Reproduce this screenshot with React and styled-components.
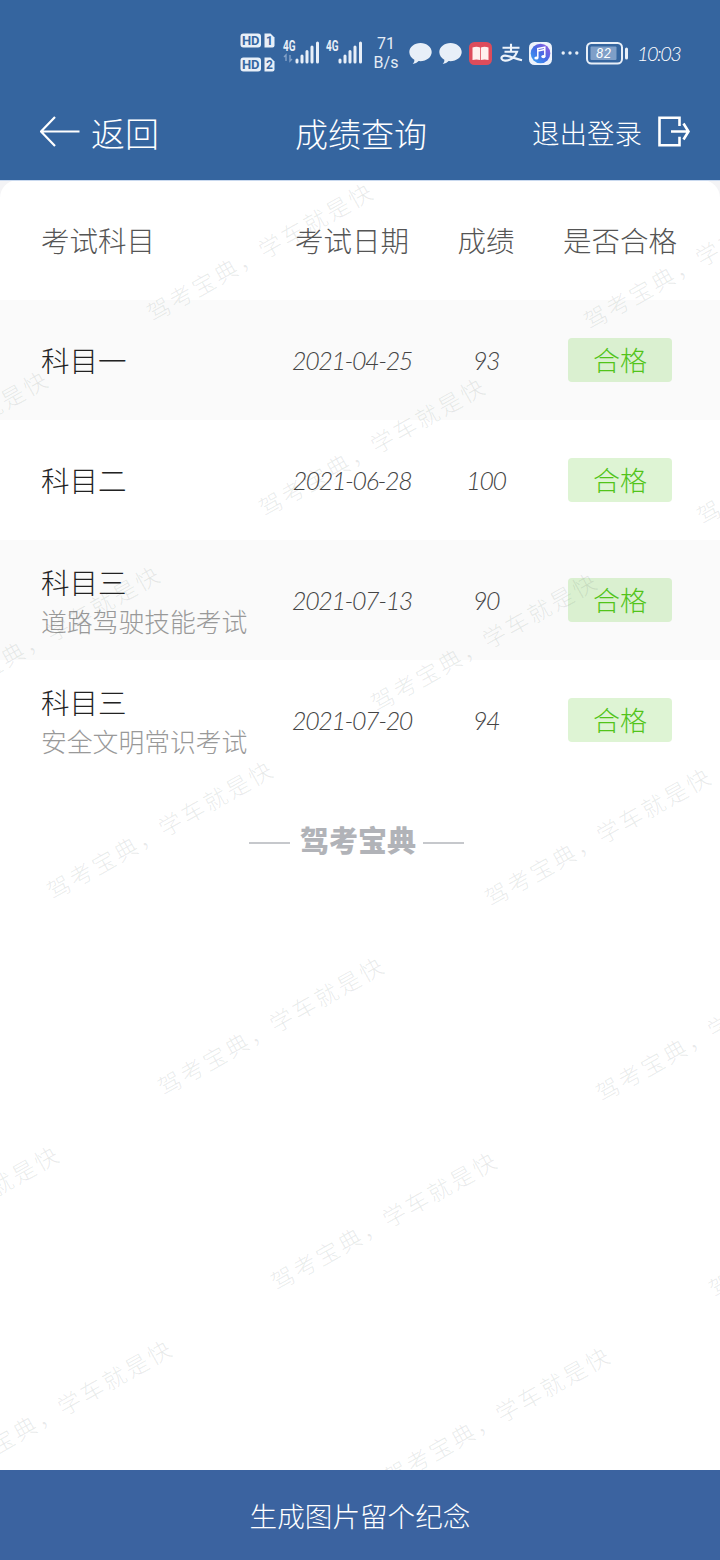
import React from "react";
import styled, { createGlobalStyle } from "styled-components";

const GlobalStyle = createGlobalStyle`
    * {
        box-sizing: border-box;
    }

    body {
        margin: 0;
        background-color: #fff;
        font-family: "Lato", "Noto Sans CJK SC", sans-serif;
        font-weight: 300;
    }
`;

const Page = styled.div`
    display: flex;
    flex-direction: column;
    width: 720px;
    height: 1560px;
    overflow: hidden;
`;

const Header = styled.header`
    height: 180px;
    background-color: #35659f;
    color: #fff;
`;

const StatusBar = styled.div`
    display: flex;
    align-items: center;
    height: 84px;
    padding: 22px 0 0 240px;
`;

const StatusIcon = styled.svg`
    display: block;
    flex: none;
    margin-left: ${(props) => props.$gap || 0}px;
    overflow: visible;
`;

const Speed = styled.div`
    width: 26px;
    margin-left: 10px;
    font-family: Roboto, sans-serif;
    font-size: 16px;
    font-weight: 400;
    line-height: 19px;
    text-align: center;
    white-space: nowrap;
    color: #e6edf6;
`;

const Clock = styled.div`
    width: 44px;
    margin-left: 8px;
    font-size: 20px;
    font-style: italic;
    letter-spacing: -1.6px;
    white-space: nowrap;
`;

const NavBar = styled.nav`
    display: grid;
    grid-template-columns: 240px 1fr 240px;
    align-items: center;
    height: 96px;
    padding: 0 30px 0 40px;
`;

const NavAction = styled.div`
    display: flex;
    align-items: center;
    justify-content: ${(props) => (props.$end ? "flex-end" : "flex-start")};
    gap: ${(props) => (props.$end ? 16 : 11)}px;
    font-size: ${(props) => (props.$end ? 27.5 : 34)}px;
    line-height: 48px;
    white-space: nowrap;
`;

const NavText = styled.span`
    padding-top: 3px;
`;

const Title = styled.h1`
    margin: 0 0 0 -8px;
    padding-top: 3px;
    font-size: 33px;
    font-weight: 300;
    line-height: 48px;
    text-align: center;
    white-space: nowrap;
`;

const Content = styled.main`
    position: relative;
    flex: 1;
    overflow: hidden;
    border-top: 1px solid #c9d9ef;
    background: linear-gradient(#f4f4f6 40px, #fff 40px);
`;

const Table = styled.div`
    margin-top: -1px;
    border-radius: 18px 18px 0 0;
    background-color: #fff;
`;

const Row = styled.div`
    display: grid;
    grid-template-columns: 272px 160px 108px 160px;
    align-items: center;
    height: 120px;
    background-color: ${(props) => (props.$striped ? "#fafafa" : "transparent")};
`;

const Th = styled.div`
    padding: 2px 0 0 ${(props) => (props.$first ? 41 : 0)}px;
    font-size: 28.5px;
    line-height: 40px;
    text-align: ${(props) => (props.$first ? "start" : "center")};
    white-space: nowrap;
    color: #555;
`;

const Td = styled.div`
    font-size: 25px;
    font-style: italic;
    letter-spacing: -1.4px;
    text-align: center;
    white-space: nowrap;
    color: #444;
`;

const Subject = styled.div`
    padding: 2px 0 0 41px;
    font-size: 28.5px;
    line-height: 39px;
    white-space: nowrap;
    color: #222;
`;

const Detail = styled.div`
    margin-bottom: -2px;
    font-size: 25.8px;
    line-height: 38px;
    color: #999;
`;

const Badge = styled.div`
    width: 104px;
    height: 44px;
    margin: 0 auto;
    border-radius: 4px;
    background-color: rgba(82, 196, 26, 0.19);
    font-size: 27px;
    line-height: 45px;
    text-align: center;
    color: #52c41a;
`;

const Brand = styled.div`
    display: flex;
    align-items: center;
    justify-content: center;
    gap: 7px;
    height: 48px;
    margin: 37px 7px 0 0;
    font-size: 29px;
    font-weight: 900;
    line-height: 48px;
    color: #b1b3b8;

    &::before,
    &::after {
        content: "";
        width: 41px;
        height: 2px;
        margin: 4px 3px 0;
        background-color: #c6c8cc;
    }

    &::after {
        margin-left: 0;
    }
`;

const WatermarkLayer = styled.div`
    position: absolute;
    inset: 0;
    overflow: hidden;
    pointer-events: none;
`;

const Watermark = styled.span`
    position: absolute;
    left: ${(props) => props.$x}px;
    top: ${(props) => props.$y}px;
    font-size: 23px;
    letter-spacing: 2.7px;
    line-height: 30px;
    white-space: nowrap;
    color: rgba(70, 90, 85, 0.12);
    transform: translate(-10px, -14px) rotate(-29.5deg);
    transform-origin: 12px 15px;
`;

const Footer = styled.footer`
    height: 90px;
    background-color: #3b63a0;
    font-size: 27.6px;
    line-height: 94px;
    text-align: center;
    color: #fff;
`;

const results = [
    { subject: "科目一", date: "2021-04-25", score: 93 },
    { subject: "科目二", date: "2021-06-28", score: 100 },
    { subject: "科目三", detail: "道路驾驶技能考试", date: "2021-07-13", score: 90 },
    { subject: "科目三", detail: "安全文明常识考试", date: "2021-07-20", score: 94 },
];

const watermarks = [
    [157, 127], [594, 135],
    [-168, 315], [269, 322], [707, 330],
    [-56, 510], [381, 517],
    [57, 705], [495, 712],
    [168, 901], [606, 907],
    [-157, 1090], [281, 1096], [719, 1103],
    [-44, 1284], [394, 1291],
];

const HdIcon = () => (
    <StatusIcon width="36" height="40" viewBox="0 0 36 40">
        {[1, 2].map((n) => (
            <g key={n} transform={`translate(0 ${(n - 1) * 24})`}>
                <rect x="0.5" y="0.5" width="20.5" height="14" rx="3" fill="#e8eff8" />
                <path d="M24.5 0.5h6l4 4v8a2 2 0 0 1-2 2h-8z" fill="#e8eff8" />
                <text x="10.7" y="12.2" fontSize="13" fontFamily="Roboto" fontWeight="700" textAnchor="middle" fill="#35659f">HD</text>
                <text x="29.4" y="12.4" fontSize="12" fontFamily="Roboto" fontWeight="700" textAnchor="middle" fill="#35659f">{n}</text>
            </g>
        ))}
    </StatusIcon>
);

const SignalIcon = ({ gap, data }) => (
    <StatusIcon $gap={gap} width="37" height="24" viewBox="0 0 37 24">
        <text x="0" y="10.2" fontSize="14" fontFamily="Roboto" fontWeight="700" textLength="12.5" lengthAdjust="spacingAndGlyphs" fill="#e8eff8">4G</text>
        {data && (
            <path d="M3 20v-6l-2 2M7 14v6l2-2" fill="none" stroke="#84a2c8" strokeWidth="1.4" />
        )}
        <path d="M14 19v2M19 15v6M24 10.500v10.500M29 6v15M34.500 2v19" fill="none" stroke="#e8eff8" strokeWidth="3" strokeLinecap="round" />
    </StatusIcon>
);

const ChatIcon = ({ gap }) => (
    <StatusIcon $gap={gap} width="23" height="23" viewBox="0 0 23 23">
        <path d="M11.500 1C5.300 1 0.300 5 0.300 10c0 3.300 2 6 5 7.700 0.300 1.600-0.400 3.100-1.600 4.300 2.500-0.200 4.500-1.300 5.900-2.900C17 19.800 22.700 15.500 22.700 10 22.700 5 17.700 1 11.500 1z" fill="#e8eff8" />
    </StatusIcon>
);

const BookIcon = () => (
    <StatusIcon $gap={7} width="23" height="23" viewBox="0 0 23 23">
        <rect width="23" height="23" rx="5.500" fill="#dd4c5b" />
        <path d="M3.500 5.500q4-1.500 7.600 0v12.500q-3.600-1.200-7.600 0zM11.900 5.500q3.600-1.500 7.600 0v12.500q-4-1.200-7.600 0z" fill="#fff1ee" />
    </StatusIcon>
);

const AlipayIcon = () => (
    <StatusIcon $gap={8} width="23" height="22" viewBox="0 0 23 22">
        <path d="M2.500 5.800h17M11 1.800v8M4.500 9.800h12.500C15 15.500 10 18.800 5 18.600 1.500 18.400 0.700 16 2.200 14.500 5.500 11.800 12 16 22 18.200" fill="none" stroke="#eef4fb" strokeWidth="2.100" />
    </StatusIcon>
);

const MusicIcon = () => (
    <StatusIcon $gap={6} width="23" height="23" viewBox="0 0 23 23">
        <defs>
            <linearGradient id="music" x1="0" y1="1" x2="1" y2="0">
                <stop offset="0" stopColor="#38a8f5" />
                <stop offset="0.5" stopColor="#466be4" />
                <stop offset="1" stopColor="#a057df" />
            </linearGradient>
        </defs>
        <rect width="23" height="23" rx="5.500" fill="#eef3fc" />
        <circle cx="11.500" cy="11.500" r="9.800" fill="url(#music)" />
        <path d="M8.800 15.800V6.600l7-1.400v9.200M8.800 9l7-1.400" fill="none" stroke="#fff" strokeWidth="1.500" />
        <ellipse cx="7.400" cy="16" rx="2.100" ry="1.600" fill="#fff" />
        <ellipse cx="14.400" cy="14.600" rx="2.100" ry="1.600" fill="#fff" />
    </StatusIcon>
);

const MoreIcon = () => (
    <StatusIcon $gap={9} width="18" height="6" viewBox="0 0 18 6">
        <circle cx="2.200" cy="3" r="1.700" fill="#e8eff8" />
        <circle cx="9" cy="3" r="1.700" fill="#e8eff8" />
        <circle cx="15.800" cy="3" r="1.700" fill="#e8eff8" />
    </StatusIcon>
);

const BatteryIcon = () => (
    <StatusIcon $gap={7} width="43" height="23" viewBox="0 0 43 23">
        <rect x="1" y="1" width="35" height="20.500" rx="4.500" fill="none" stroke="#e8eff8" strokeWidth="2" />
        <rect x="4.500" y="4.500" width="26" height="13.500" rx="1" fill="#7f9fc8" />
        <path d="M40.500 7v9" stroke="#e8eff8" strokeWidth="3" strokeLinecap="round" />
        <text x="17.500" y="16" fontSize="13.500" fontFamily="Lato" fontStyle="italic" fontWeight="400" textAnchor="middle" fill="#fff">82</text>
    </StatusIcon>
);

const BackIcon = () => (
    <svg width="40" height="32" viewBox="0 0 40 32" fill="none" stroke="#fff" strokeWidth="2.200">
        <path d="M39.500 15.500H1M15 1L1 15.500l14 14.500" />
    </svg>
);

const LogoutIcon = () => (
    <svg width="32" height="32" viewBox="0 0 32 32" fill="none" stroke="#fff" strokeWidth="2.600">
        <path d="M21.500 10V1.800H1.500v27.400h20v-8.500M13 15.500h17.500M25.500 7.500l5 8-5 8" />
    </svg>
);

const Grid = ({ items }) => {
    return (
        <Table>
            <Row>
                <Th $first>考试科目</Th>
                <Th>考试日期</Th>
                <Th>成绩</Th>
                <Th>是否合格</Th>
            </Row>
            {items.map((item, i) => (
                <Row key={i} $striped={i % 2 === 0}>
                    <Subject>
                        {item.subject}
                        {item.detail && <Detail>{item.detail}</Detail>}
                    </Subject>
                    <Td>{item.date}</Td>
                    <Td>{item.score}</Td>
                    <Badge>合格</Badge>
                </Row>
            ))}
        </Table>
    );
};

const App = () => {
    return (
        <Page>
            <GlobalStyle />
            <Header>
                <StatusBar>
                    <HdIcon />
                    <SignalIcon gap={7} data />
                    <SignalIcon gap={6} />
                    <Speed>71<br />B/s</Speed>
                    <ChatIcon gap={10} />
                    <ChatIcon gap={7} />
                    <BookIcon />
                    <AlipayIcon />
                    <MusicIcon />
                    <MoreIcon />
                    <BatteryIcon />
                    <Clock>10:03</Clock>
                </StatusBar>
                <NavBar>
                    <NavAction>
                        <BackIcon />
                        <NavText>返回</NavText>
                    </NavAction>
                    <Title>成绩查询</Title>
                    <NavAction $end>
                        <NavText>退出登录</NavText>
                        <LogoutIcon />
                    </NavAction>
                </NavBar>
            </Header>
            <Content>
                <Grid items={results} />
                <Brand>驾考宝典</Brand>
                <WatermarkLayer>
                    {watermarks.map(([x, y]) => (
                        <Watermark key={`${x},${y}`} $x={x} $y={y}>驾考宝典，学车就是快</Watermark>
                    ))}
                </WatermarkLayer>
            </Content>
            <Footer>生成图片留个纪念</Footer>
        </Page>
    );
};

export default App;
